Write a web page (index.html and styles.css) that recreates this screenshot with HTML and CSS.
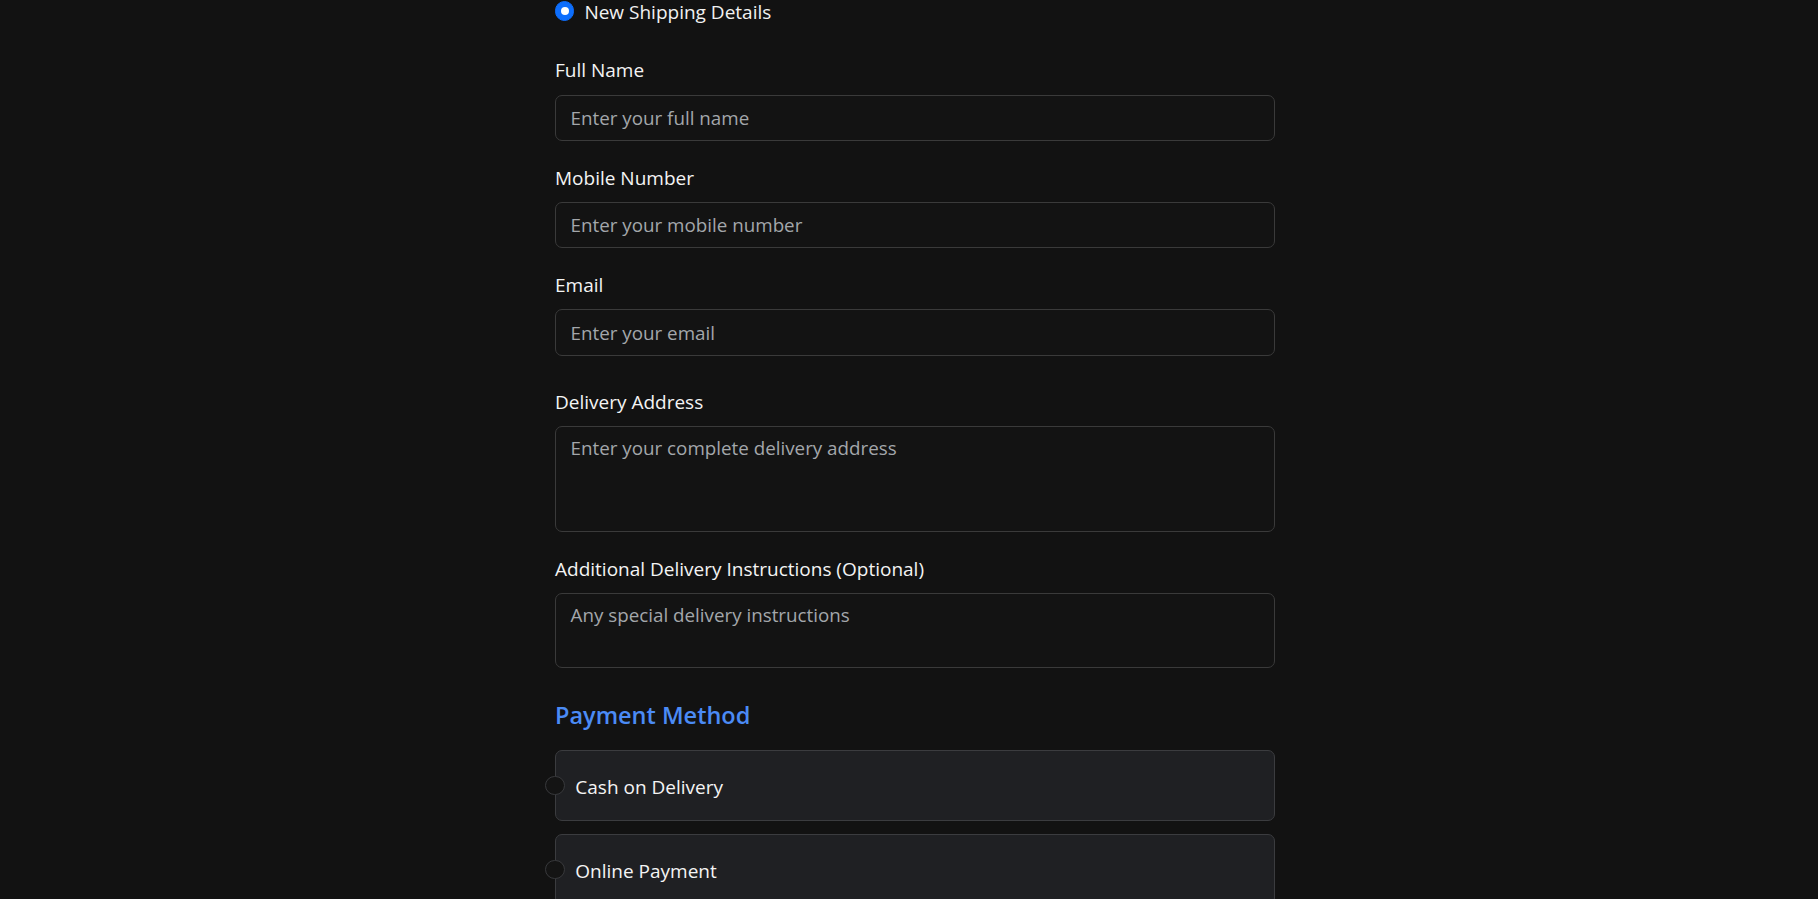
FILE: index.html
```html
<!DOCTYPE html>
<html lang="en">
<head>
<meta charset="utf-8">
<title>Checkout</title>
<link rel="stylesheet" href="styles.css">
</head>
<body>
<div class="page">
  <form class="form">
    <label class="choice">
      <span class="radio radio-checked"></span>
      <span class="choice-text">New Shipping Details</span>
    </label>

    <div class="field first">
      <label class="label">Full Name</label>
      <input class="control" type="text" placeholder="Enter your full name">
    </div>
    <div class="field">
      <label class="label">Mobile Number</label>
      <input class="control" type="text" placeholder="Enter your mobile number">
    </div>
    <div class="field">
      <label class="label">Email</label>
      <input class="control" type="text" placeholder="Enter your email">
    </div>
    <div class="field spaced">
      <label class="label">Delivery Address</label>
      <textarea class="control area-lg" placeholder="Enter your complete delivery address"></textarea>
    </div>
    <div class="field">
      <label class="label">Additional Delivery Instructions (Optional)</label>
      <textarea class="control area-sm" placeholder="Any special delivery instructions"></textarea>
    </div>

    <h5 class="section-title">Payment Method</h5>
    <div class="methods">
      <label class="method">
        <span class="radio"></span>
        <span class="method-text">Cash on Delivery</span>
      </label>
      <label class="method">
        <span class="radio"></span>
        <span class="method-text">Online Payment</span>
      </label>
    </div>
  </form>
</div>
</body>
</html>
```
FILE: styles.css
```css
* { box-sizing: border-box; }

html, body {
  margin: 0;
  padding: 0;
  background: #121212;
}

body {
  font-family: "Open Sans", "Noto Sans", sans-serif;
  font-size: 19px;
  line-height: 28.8px;
  color: #f1f1f1;
  overflow: hidden;
  height: 899px;
}

.page {
  width: 732px;
  margin: 0 auto;
  padding-left: 12px;
}

.form {
  width: 720px;
  display: flex;
  flex-direction: column;
}

.choice {
  display: flex;
  align-items: center;
  gap: 10px;
  margin-top: -3.5px;
  height: 28.8px;
}

.radio {
  flex: none;
  width: 19.4px;
  height: 19.4px;
  border-radius: 50%;
  border: 1px solid #38393c;
  background: #141414;
}

.radio-checked {
  background: #0d6efd;
  border-color: #0d6efd;
  position: relative;
}

.radio-checked::after {
  content: "";
  position: absolute;
  left: 50%;
  top: 50%;
  width: 8px;
  height: 8px;
  margin: -4px 0 0 -4px;
  border-radius: 50%;
  background: #ffffff;
}

.choice-text {
  color: #f1f1f1;
  padding-top: 2px;
}

.field {
  display: flex;
  flex-direction: column;
  margin-top: 21.5px;
}

.field.first { margin-top: 30px; }
.field.spaced { margin-top: 31px; }

.label {
  display: block;
  padding-top: 1.1px;
  margin-bottom: 9.4px;
  color: #f4f4f4;
}

.control {
  display: block;
  width: 100%;
  height: 46.5px;
  padding: 7.4px 13.4px 7px 14.6px;
  font-family: inherit;
  font-size: 18.8px;
  line-height: 28.8px;
  color: #e8e8e8;
  background: #131313;
  border: 1px solid #3a3a3a;
  border-radius: 7px;
  outline: none;
  resize: none;
}

.control::placeholder {
  color: #a3a7ab;
  opacity: 1;
}

.area-lg { height: 106px; }
.area-sm { height: 75.7px; }

.section-title {
  margin: 30.7px 0 18.7px;
  padding-top: 1.3px;
  font-size: 23.5px;
  line-height: 30.7px;
  font-weight: 600;
  color: #4b8bf5;
}

.methods {
  display: flex;
  flex-direction: column;
  gap: 12.6px;
}

.method {
  display: flex;
  align-items: center;
  gap: 10.5px;
  height: 71.4px;
  background: #1f2023;
  border: 1px solid #3b3c3f;
  border-radius: 7px;
}

.method .radio {
  margin-left: -10.6px;
}

.method-text {
  color: #f4f4f4;
  padding-top: 4.6px;
}
```
